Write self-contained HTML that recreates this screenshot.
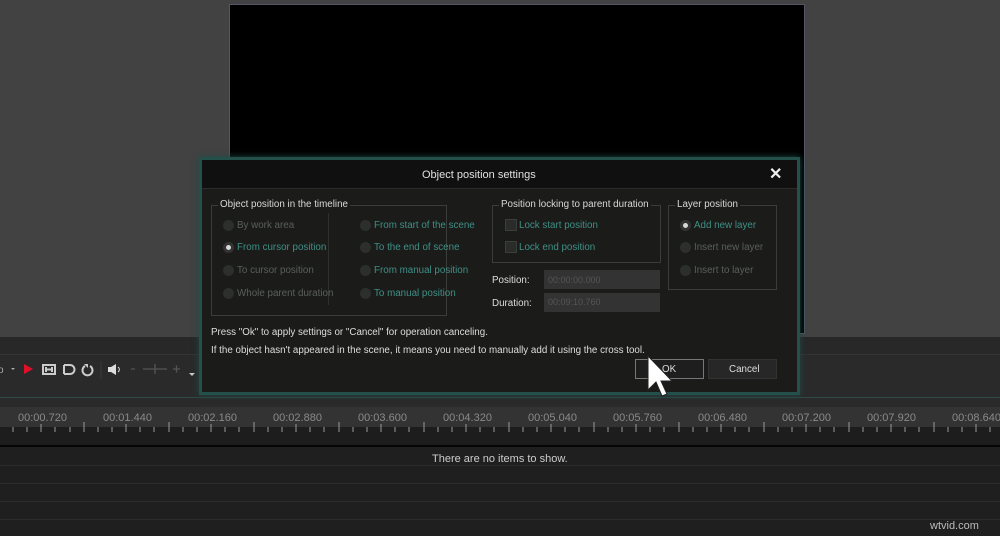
<!DOCTYPE html>
<html><head><style>
*{margin:0;padding:0;box-sizing:border-box}
body{width:1000px;height:536px;overflow:hidden;background:#424242;font-family:"Liberation Sans",sans-serif;position:relative}
.a{position:absolute}
.t{color:#ddd;font-size:9.8px;white-space:nowrap}
.g{color:#5a5f5a}
.c{color:#3f8f86}
.rad{position:absolute;width:11px;height:11px;border-radius:50%;background:#2c2f2c}
.rad.on{background:#d8d8d8;border:3px solid #333}
.box{position:absolute;width:12px;height:12px;background:#2a2c2a;border:1px solid #3a3d3a}
.fs{position:absolute;border:1px solid #3a3d3a}
.lg{position:absolute;top:-7px;left:6px;background:#1b1c1a;padding:0 2px;font-size:9.8px;color:#d8d8d8}
</style></head><body>
<div class="a" style="left:229px;top:4px;width:576px;height:330px;background:#000;border:1px solid #555566"></div>
<div class="a" style="left:0;top:337px;width:1000px;height:17px;background:#282828"></div>
<div class="a" style="left:0;top:354px;width:1000px;height:43px;background:#2a2a2a;border-top:1px solid #333"></div>
<div class="a" style="left:0;top:397px;width:1000px;height:1px;background:#2f4a47"></div>
<div class="a" style="left:0;top:398px;width:1000px;height:9px;background:#2a2a2a"></div>
<div class="a" style="left:0;top:407px;width:1000px;height:20px;background:#333"></div>
<div class="a" style="left:0;top:427px;width:1000px;height:18px;background:#1d1d1d"></div>
<div class="a" style="left:0;top:445px;width:1000px;height:2px;background:#050505"></div>
<div class="a" style="left:0;top:447px;width:1000px;height:89px;background:#1f1f1f"></div>
<div class="a" style="left:0;top:465px;width:1000px;height:1px;background:#2c2c2c"></div>
<div class="a" style="left:0;top:483px;width:1000px;height:1px;background:#2c2c2c"></div>
<div class="a" style="left:0;top:501px;width:1000px;height:1px;background:#2c2c2c"></div>
<div class="a" style="left:0;top:519px;width:1000px;height:1px;background:#2c2c2c"></div>
<div class="a t" style="left:432px;top:453px;font-size:11px;color:#ccc">There are no items to show.</div>
<div class="a t" style="left:930px;top:520px;font-size:11px;color:#bbb">wtvid.com</div>
<svg class="a" style="left:0;top:360px" width="200" height="20">
<text x="-2" y="13" fill="#aaa" font-size="10">o</text><path d="M11 8h4l-2 2z" fill="#aaa"/>
<path d="M24 4l9 5-9 5z" fill="#e0102a"/>
<path d="M43 5h12v9H43zM46 7v5M52 7v5M46 9.5h6" stroke="#ccc" stroke-width="2" fill="none"/>
<path d="M64 5v9M64 5h6a4.5 4.5 0 010 9h-6" stroke="#ccc" stroke-width="2" fill="none"/>
<path d="M85 6a5 5 0 105 0" stroke="#ccc" stroke-width="2" fill="none"/><path d="M84 4h4v4z" fill="#ccc"/>
<path d="M101 1v18" stroke="#3a3a3a"/>
<path d="M108 7h3l5-3v11l-5-3h-3z" fill="#ddd"/><path d="M118 7a3 3 0 010 5" stroke="#ddd" fill="none"/>
<path d="M131 9h4M143 9h24M155 4v10M173 9h7M176.5 5.5v7" stroke="#555" stroke-width="1.3"/>
<path d="M189 13h6l-3 3z" fill="#ccc"/>
</svg>
<svg class="a" style="left:0;top:407px" width="1000" height="25">
<g fill="#8a8a8a" font-size="11" font-family="Liberation Sans">
<text x="18" y="14">00:00.720</text><text x="103" y="14">00:01.440</text><text x="188" y="14">00:02.160</text><text x="273" y="14">00:02.880</text><text x="358" y="14">00:03.600</text><text x="443" y="14">00:04.320</text><text x="528" y="14">00:05.040</text><text x="613" y="14">00:05.760</text><text x="698" y="14">00:06.480</text><text x="782" y="14">00:07.200</text><text x="867" y="14">00:07.920</text><text x="952" y="14">00:08.640</text>
</g>
<g stroke="#999" stroke-width="1">
<path d="M13 20v5M27 20v5M41 17v8M55 20v5M70 20v5M84 15v10M98 20v5M112 20v5M126 17v8M140 20v5M154 20v5M169 15v10M183 20v5M197 20v5M211 17v8M225 20v5M239 20v5M254 15v10M268 20v5M282 20v5M296 17v8M310 20v5M324 20v5M339 15v10M353 20v5M367 20v5M381 17v8M395 20v5M409 20v5M424 15v10M438 20v5M452 20v5M466 17v8M480 20v5M494 20v5M509 15v10M523 20v5M537 20v5M551 17v8M565 20v5M579 20v5M594 15v10M608 20v5M622 20v5M636 17v8M650 20v5M664 20v5M679 15v10M693 20v5M707 20v5M721 17v8M735 20v5M749 20v5M764 15v10M778 20v5M792 20v5M806 17v8M820 20v5M834 20v5M849 15v10M863 20v5M877 20v5M891 17v8M905 20v5M919 20v5M934 15v10M948 20v5M962 20v5M976 17v8M990 20v5"/>
</g></svg>
<div class="a" style="left:199px;top:157px;width:601px;height:238px;background:#1b1c1a;border:3px solid #24504b;box-shadow:0 0 6px #1e4a45"></div>
<div class="a" style="left:202px;top:160px;width:595px;height:29px;background:#101010;border-bottom:1px solid #2a2a2a"></div>
<div class="a t" style="left:422px;top:169px;font-size:11px;color:#e0e0e0">Object position settings</div>
<div class="a t" style="left:769px;top:164px;font-size:16px;color:#eee;font-weight:bold">✕</div>

<div class="fs" style="left:211px;top:205px;width:236px;height:111px"><span class="lg">Object position in the timeline</span></div>
<div class="a" style="left:328px;top:213px;width:1px;height:92px;background:#2e312e"></div>
<div class="rad" style="left:223px;top:220px"></div><div class="a t g" style="left:237px;top:220px">By work area</div>
<div class="rad on" style="left:223px;top:242px"></div><div class="a t c" style="left:237px;top:242px">From cursor position</div>
<div class="rad" style="left:223px;top:265px"></div><div class="a t g" style="left:237px;top:265px">To cursor position</div>
<div class="rad" style="left:223px;top:288px"></div><div class="a t g" style="left:237px;top:288px">Whole parent duration</div>
<div class="rad" style="left:360px;top:220px"></div><div class="a t c" style="left:374px;top:220px">From start of the scene</div>
<div class="rad" style="left:360px;top:242px"></div><div class="a t c" style="left:374px;top:242px">To the end of scene</div>
<div class="rad" style="left:360px;top:265px"></div><div class="a t c" style="left:374px;top:265px">From manual position</div>
<div class="rad" style="left:360px;top:288px"></div><div class="a t c" style="left:374px;top:288px">To manual position</div>

<div class="fs" style="left:492px;top:205px;width:169px;height:58px"><span class="lg">Position locking to parent duration</span></div>
<div class="box" style="left:505px;top:219px"></div><div class="a t c" style="left:519px;top:220px">Lock start position</div>
<div class="box" style="left:505px;top:241px"></div><div class="a t c" style="left:519px;top:242px">Lock end position</div>
<div class="a t" style="left:492px;top:275px">Position:</div>
<div class="a" style="left:544px;top:270px;width:116px;height:19px;background:#333"></div>
<div class="a t" style="left:548px;top:275px;font-size:9px;color:#555">00:00:00.000</div>
<div class="a t" style="left:492px;top:298px">Duration:</div>
<div class="a" style="left:544px;top:293px;width:116px;height:19px;background:#333"></div>
<div class="a t" style="left:548px;top:297px;font-size:9px;color:#555">00:09:10.760</div>

<div class="fs" style="left:668px;top:205px;width:109px;height:85px"><span class="lg">Layer position</span></div>
<div class="rad on" style="left:680px;top:220px"></div><div class="a t c" style="left:694px;top:220px">Add new layer</div>
<div class="rad" style="left:680px;top:242px"></div><div class="a t g" style="left:694px;top:242px">Insert new layer</div>
<div class="rad" style="left:680px;top:265px"></div><div class="a t g" style="left:694px;top:265px">Insert to layer</div>

<div class="a t" style="left:211px;top:327px">Press "Ok" to apply settings or "Cancel" for operation canceling.</div>
<div class="a t" style="left:211px;top:345px">If the object hasn't appeared in the scene, it means you need to manually add it using the cross tool.</div>
<div class="a" style="left:635px;top:359px;width:69px;height:20px;background:#1e1e1e;border:1px solid #777"></div>
<div class="a t" style="left:662px;top:364px">OK</div>
<div class="a" style="left:708px;top:359px;width:69px;height:20px;background:#272727;border:1px solid #333"></div>
<div class="a t" style="left:729px;top:364px">Cancel</div>
<svg class="a" style="left:645px;top:354px" width="30" height="48"><path d="M3 2v34l8-8 6 14 5-2-6-13h11z" fill="#fff" stroke="#222" stroke-width="1"/></svg>
</body></html>
